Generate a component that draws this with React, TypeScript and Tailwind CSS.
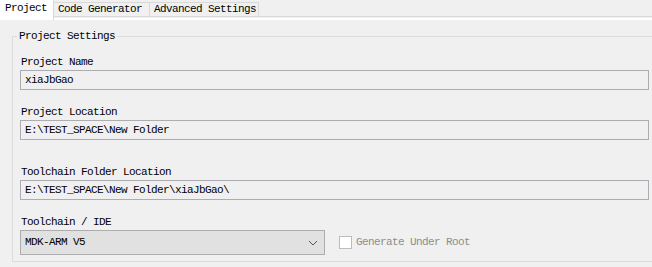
import React from "react";

const font = { fontFamily: '"Liberation Mono", "DejaVu Sans Mono", monospace' };

function Field({ label, value, top }: { label: string; value: string; top: string }) {
  return (
    <div className={`flex flex-col ${top}`}>
      <div className="pl-[1px] h-[12px] leading-[12px]">{label}</div>
      <div className="mt-[2px] h-[20px] w-[629px] border border-[#acacb2] bg-[#f0f0f0] pl-[4px] leading-[18px]">
        {value}
      </div>
    </div>
  );
}

export default function App() {
  return (
    <div
      className="w-[652px] h-[267px] overflow-hidden bg-[#f0f0f0] text-[11px] tracking-[-0.6px] text-black"
      style={font}
    >
      <div className="relative flex h-[17px] border-b border-[#d9d9d9]">
        <div className="relative z-10 h-[20px] w-[54px] bg-white border-r border-[#d9d9d9] pl-[5px] leading-[16px]">
          Project
        </div>
        <div className="mt-[2px] h-[14px] w-[96px] border-r border-t border-[#d9d9d9] pl-[4px] leading-[13px]">
          Code Generator
        </div>
        <div className="mt-[2px] h-[14px] w-[109px] border-r border-t border-[#d9d9d9] pl-[4px] leading-[13px]">
          Advanced Settings
        </div>
      </div>
      <div className="mt-[1px] h-[2px] bg-white" />
      <div className="pl-[12px] pt-[10px]">
        <fieldset className="w-[660px] border-l border-t border-b border-[#dcdcdc] pl-[7px] pb-[6px]">
          <legend className="-ml-[3px] px-[2px] h-[12px] leading-[12px]">Project Settings</legend>
          <Field label="Project Name" value="xiaJbGao" top="mt-[14px]" />
          <Field label="Project Location" value="E:\TEST_SPACE\New Folder" top="mt-[16px]" />
          <Field
            label="Toolchain Folder Location"
            value="E:\TEST_SPACE\New Folder\xiaJbGao\"
            top="mt-[26px]"
          />
          <div className="mt-[16px] flex flex-col">
            <div className="pl-[1px] h-[12px] leading-[12px]">Toolchain / IDE</div>
            <div className="mt-[2px] flex items-center">
              <div className="flex h-[25px] w-[305px] items-center justify-between border border-[#adadad] bg-[#e1e1e1] pl-[4px] pr-[6px]">
                <span>MDK-ARM V5</span>
                <svg width="10" height="6" viewBox="0 0 10 6">
                  <path d="M1 1 L5 5 L9 1" fill="none" stroke="#555" strokeWidth="1" />
                </svg>
              </div>
              <div className="ml-[14px] h-[13px] w-[13px] border border-[#bcbcbc] bg-white" />
              <span className="ml-[4px] text-[#8d8d8d]">Generate Under Root</span>
            </div>
          </div>
        </fieldset>
      </div>
    </div>
  );
}
